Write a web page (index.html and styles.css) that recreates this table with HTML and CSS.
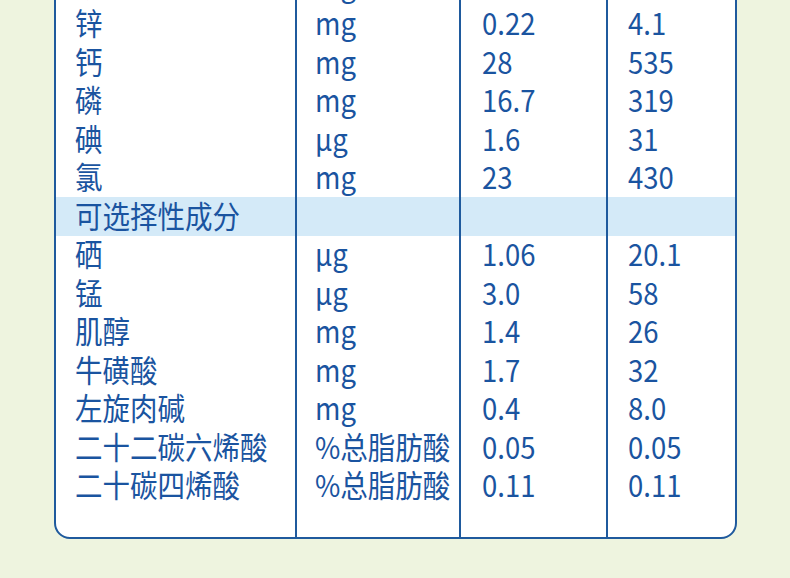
FILE: index.html
```html
<!DOCTYPE html>
<html lang="zh">
<head>
<meta charset="utf-8">
<title>营养成分表</title>
<link rel="stylesheet" href="styles.css">
</head>
<body>
<div class="card">
  <div class="grid">
    <div class="c"><span class="t">铁</span></div><div class="c"><span class="t">mg</span></div><div class="c"><span class="t">0.24</span></div><div class="c"><span class="t">4.6</span></div>
    <div class="c"><span class="t">锌</span></div><div class="c"><span class="t">mg</span></div><div class="c"><span class="t">0.22</span></div><div class="c"><span class="t">4.1</span></div>
    <div class="c"><span class="t">钙</span></div><div class="c"><span class="t">mg</span></div><div class="c"><span class="t">28</span></div><div class="c"><span class="t">535</span></div>
    <div class="c"><span class="t">磷</span></div><div class="c"><span class="t">mg</span></div><div class="c"><span class="t">16.7</span></div><div class="c"><span class="t">319</span></div>
    <div class="c"><span class="t">碘</span></div><div class="c"><span class="t">µg</span></div><div class="c"><span class="t">1.6</span></div><div class="c"><span class="t">31</span></div>
    <div class="c"><span class="t">氯</span></div><div class="c"><span class="t">mg</span></div><div class="c"><span class="t">23</span></div><div class="c"><span class="t">430</span></div>
    <div class="c hl"><span class="t">可选择性成分</span></div><div class="c hl"></div><div class="c hl"></div><div class="c hl"></div>
    <div class="c"><span class="t">硒</span></div><div class="c"><span class="t">µg</span></div><div class="c"><span class="t">1.06</span></div><div class="c"><span class="t">20.1</span></div>
    <div class="c"><span class="t">锰</span></div><div class="c"><span class="t">µg</span></div><div class="c"><span class="t">3.0</span></div><div class="c"><span class="t">58</span></div>
    <div class="c"><span class="t">肌醇</span></div><div class="c"><span class="t">mg</span></div><div class="c"><span class="t">1.4</span></div><div class="c"><span class="t">26</span></div>
    <div class="c"><span class="t">牛磺酸</span></div><div class="c"><span class="t">mg</span></div><div class="c"><span class="t">1.7</span></div><div class="c"><span class="t">32</span></div>
    <div class="c"><span class="t">左旋肉碱</span></div><div class="c"><span class="t">mg</span></div><div class="c"><span class="t">0.4</span></div><div class="c"><span class="t">8.0</span></div>
    <div class="c"><span class="t">二十二碳六烯酸</span></div><div class="c"><span class="t">%总脂肪酸</span></div><div class="c"><span class="t">0.05</span></div><div class="c"><span class="t">0.05</span></div>
    <div class="c"><span class="t">二十碳四烯酸</span></div><div class="c"><span class="t">%总脂肪酸</span></div><div class="c"><span class="t">0.11</span></div><div class="c"><span class="t">0.11</span></div>
    <div class="c pad"></div><div class="c pad"></div><div class="c pad"></div><div class="c pad"></div>
  </div>
</div>
</body>
</html>
```

FILE: styles.css
```css
html, body {
  margin: 0;
  padding: 0;
  background: #eef4df;
  height: 578px;
  overflow: hidden;
}
.card {
  margin: -36px 0 0 54px;
  width: 683px;
  box-sizing: border-box;
  background: #ffffff;
  border: 2px solid #1f5a9d;
  border-radius: 16px;
  overflow: hidden;
}
.grid {
  display: grid;
  grid-template-columns: 241px 164px 147px 127px;
}
.c {
  font-family: "Noto Sans CJK SC", "Noto Sans", sans-serif;
  font-size: 27.5px;
  line-height: 38.5px;
  height: 38.5px;
  color: #1a54a0;
  padding-left: 20px;
  border-right: 2px solid #1f5a9d;
  white-space: nowrap;
}
.t {
  display: inline-block;
  line-height: 32px;
  vertical-align: middle;
  transform: translateY(-6px) scaleY(1.1);
}
.c:nth-child(4n) {
  border-right: none;
}
.c:nth-child(4n+1) {
  padding-left: 19px;
}
.c:nth-child(4n+2) {
  padding-left: 18px;
}
.c:nth-child(4n+3) {
  padding-left: 21px;
}
.hl {
  background: #d4eaf8;
}
.pad {
  height: 32px;
}
```
